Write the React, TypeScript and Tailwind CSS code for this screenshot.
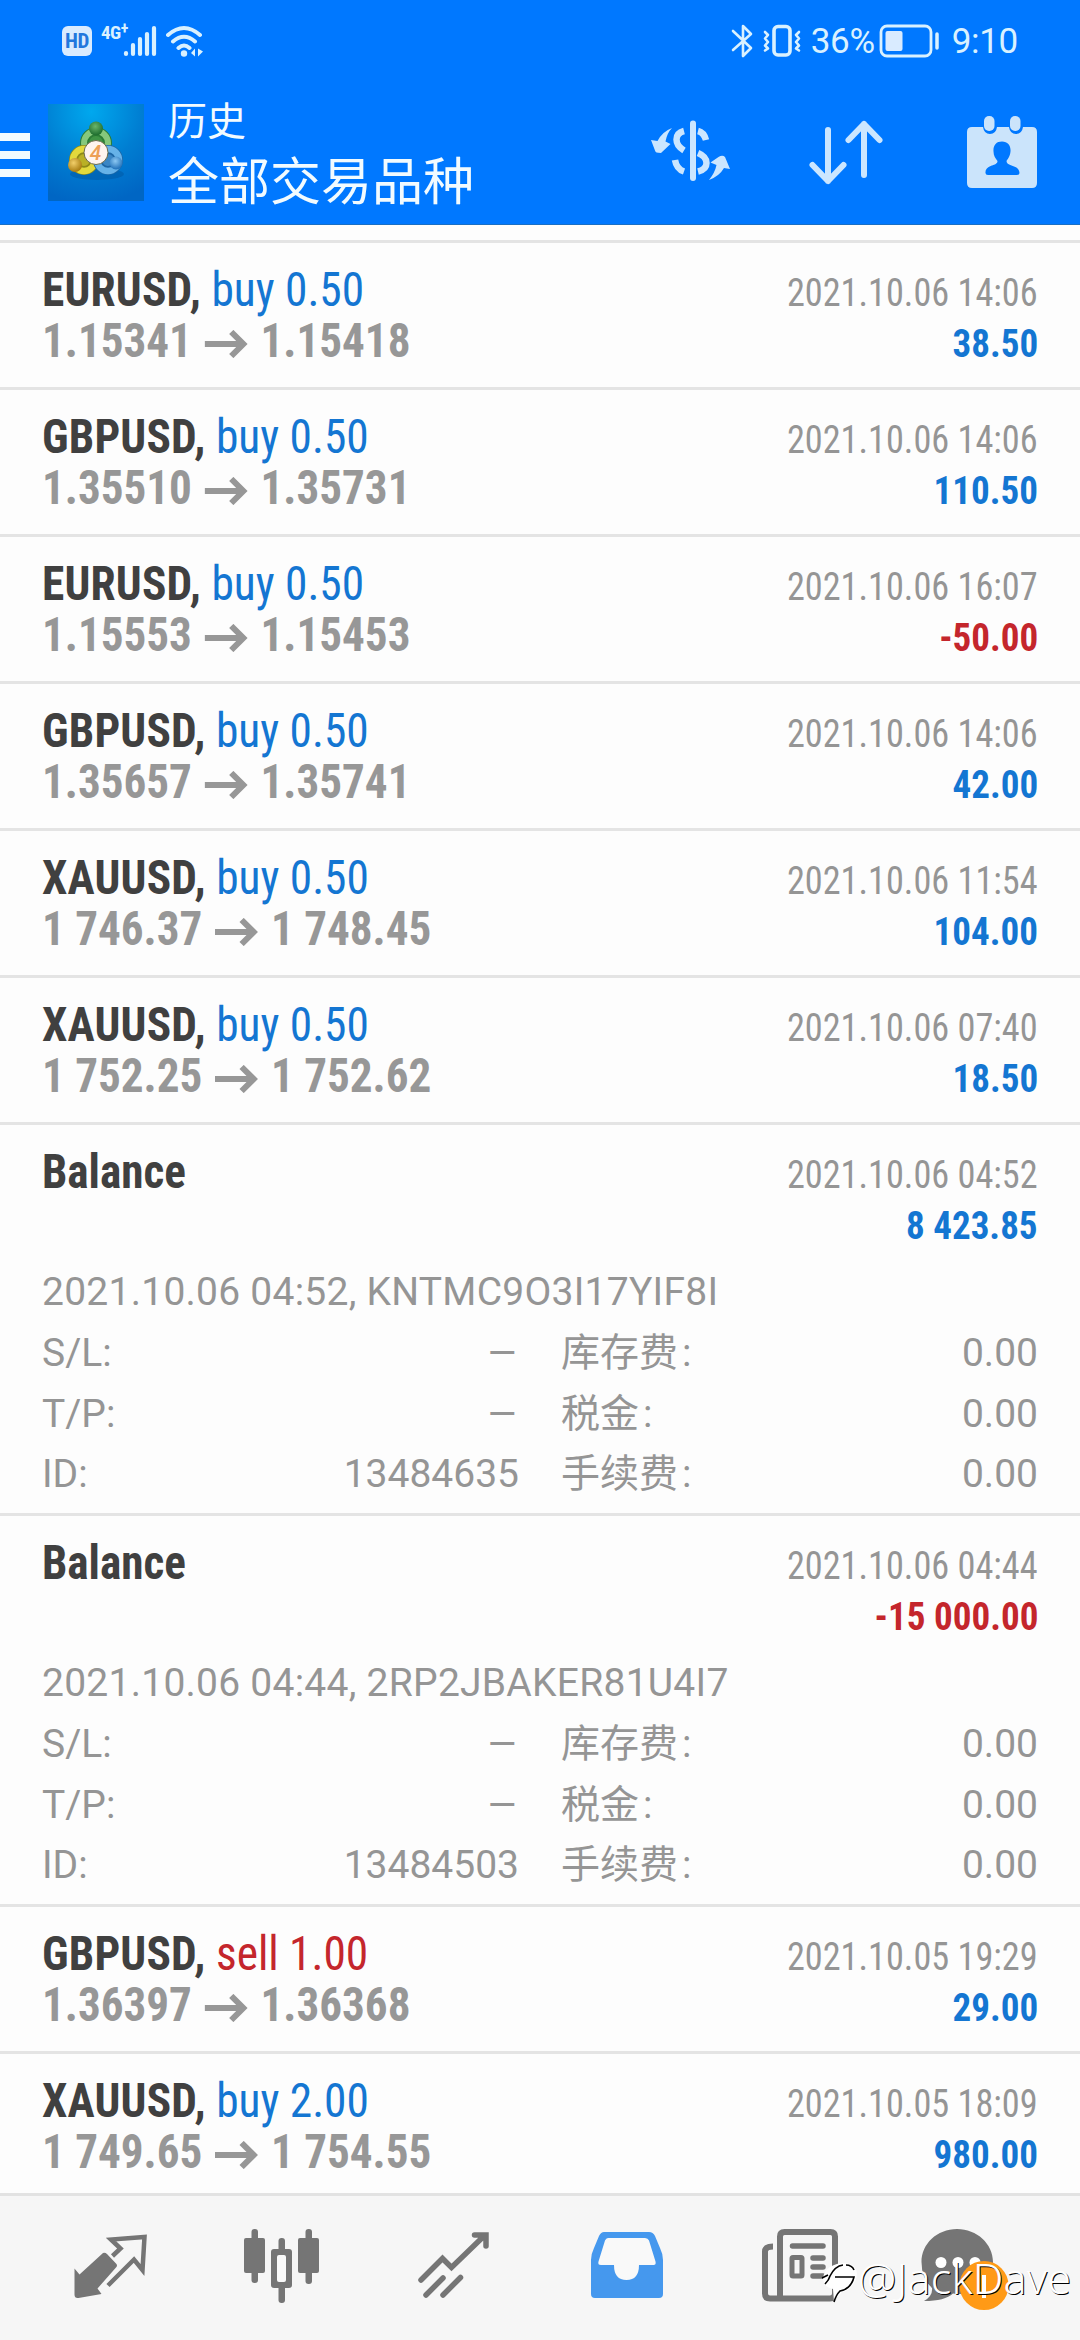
import type { ReactNode } from 'react';
import clsx from 'clsx';

type Deal = {
  symbol: string;
  side: 'buy' | 'sell';
  volume: string;
  open: string;
  close: string;
  time: string;
  profit: string;
};

type Balance = {
  time: string;
  profit: string;
  comment: string;
  id: string;
};

const deals: Deal[] = [
  { symbol: 'EURUSD', side: 'buy', volume: '0.50', open: '1.15341', close: '1.15418', time: '2021.10.06 14:06', profit: '38.50' },
  { symbol: 'GBPUSD', side: 'buy', volume: '0.50', open: '1.35510', close: '1.35731', time: '2021.10.06 14:06', profit: '110.50' },
  { symbol: 'EURUSD', side: 'buy', volume: '0.50', open: '1.15553', close: '1.15453', time: '2021.10.06 16:07', profit: '-50.00' },
  { symbol: 'GBPUSD', side: 'buy', volume: '0.50', open: '1.35657', close: '1.35741', time: '2021.10.06 14:06', profit: '42.00' },
  { symbol: 'XAUUSD', side: 'buy', volume: '0.50', open: '1 746.37', close: '1 748.45', time: '2021.10.06 11:54', profit: '104.00' },
  { symbol: 'XAUUSD', side: 'buy', volume: '0.50', open: '1 752.25', close: '1 752.62', time: '2021.10.06 07:40', profit: '18.50' },
];

const balances: Balance[] = [
  { time: '2021.10.06 04:52', profit: '8 423.85', comment: 'KNTMC9O3I17YIF8I', id: '13484635' },
  { time: '2021.10.06 04:44', profit: '-15 000.00', comment: '2RP2JBAKER81U4I7', id: '13484503' },
];

const olderDeals: Deal[] = [
  { symbol: 'GBPUSD', side: 'sell', volume: '1.00', open: '1.36397', close: '1.36368', time: '2021.10.05 19:29', profit: '29.00' },
  { symbol: 'XAUUSD', side: 'buy', volume: '2.00', open: '1 749.65', close: '1 754.55', time: '2021.10.05 18:09', profit: '980.00' },
];

const StatusBar = () => (
  <div className="flex h-[80px] items-center pr-[62px] pl-[62px] pt-[2px] text-[#d9f1ff]">
    <span className="flex h-[30px] w-[30px] items-center justify-center rounded-[6px] bg-[#d9ebff] text-[21px] leading-none font-bold tracking-[-0.5px] text-[#2277dd] font-['Roboto_Condensed',sans-serif]">
      HD
    </span>
    <span className="mb-[18px] ml-[9px] flex w-[22px] items-start text-[19px] leading-none font-bold tracking-[-0.5px] font-['Roboto_Condensed',sans-serif]">
      4G<span className="-mt-[2px] text-[16px]">+</span>
    </span>
    <svg className="h-[32px] w-[34px]" viewBox="0 0 34 32" stroke="currentColor" strokeWidth="4.2" strokeLinecap="round">
      <path d="M3 29v-1M10 29v-9M17 29V14M24 29V9M31 29V3" />
    </svg>
    <svg className="ml-[9px] h-[33px] w-[38px]" viewBox="0 0 38 33" fill="none" stroke="currentColor" strokeWidth="4" strokeLinecap="round">
      <path d="M2 10q16-14 32 0M7 16.500q11-9.500 22 0M12.500 23q5.500-5 11 0" />
      <circle cx="18" cy="28.500" r="3.200" fill="currentColor" stroke="none" />
      <path d="M29 23.500v8l-4-3.500zM32 23.500v8l5-5z" fill="currentColor" stroke="none" />
    </svg>
    <div className="flex-1" />
    <svg className="h-[36px] w-[22px]" viewBox="0 0 22 36" fill="none" stroke="currentColor" strokeWidth="2.600" strokeLinejoin="round" strokeLinecap="round">
      <path d="M2 8l18 17-8 8V3l8 8L2 27" />
    </svg>
    <svg className="ml-[9px] h-[36px] w-[40px]" viewBox="0 0 40 36" fill="none" stroke="currentColor" strokeLinejoin="round" strokeLinecap="round">
      <rect x="12" y="3.500" width="16" height="28.500" rx="4" strokeWidth="3.600" />
      <path d="M3 9l3 3-3 3.500 3 3.500-3 3.500 3 3-3 2M37 9l-3 3 3 3.500-3 3.500 3 3.500-3 3 3 2" strokeWidth="2.600" />
    </svg>
    <span className="ml-[9px] w-[68px] text-[35px] leading-none whitespace-nowrap tracking-[-0.3px] font-['Roboto',sans-serif]">36%</span>
    <svg className="h-[34px] w-[62px]" viewBox="0 0 62 34" fill="none">
      <rect x="2" y="2" width="50" height="30" rx="6" stroke="currentColor" strokeWidth="2.800" />
      <rect x="6.500" y="7" width="17" height="20" rx="2" fill="#d9ebff" />
      <path d="M58 10v14" stroke="currentColor" strokeWidth="3.500" strokeLinecap="round" />
    </svg>
    <span className="ml-[11px] text-[35px] leading-none tracking-[-0.3px] font-['Roboto',sans-serif]">9:10</span>
  </div>
);

const Logo = () => (
  <svg className="h-[97px] w-[96px] shrink-0" viewBox="48 104 96 97">
    <defs>
      <radialGradient id="sky" cx="45%" cy="8%" r="95%">
        <stop offset="0" stopColor="#00a8ee" />
        <stop offset="0.550" stopColor="#007ed2" />
        <stop offset="1" stopColor="#0066c4" />
      </radialGradient>
      <radialGradient id="green" cx="45%" cy="35%" r="65%">
        <stop offset="0" stopColor="#6ab56a" />
        <stop offset="1" stopColor="#1b6b2c" />
      </radialGradient>
      <radialGradient id="gold" cx="40%" cy="35%" r="65%">
        <stop offset="0" stopColor="#f2cf6a" />
        <stop offset="1" stopColor="#a87c10" />
      </radialGradient>
      <radialGradient id="azure" cx="45%" cy="35%" r="65%">
        <stop offset="0" stopColor="#8cc8f2" />
        <stop offset="1" stopColor="#1f6fb8" />
      </radialGradient>
    </defs>
    <rect x="48" y="104" width="96" height="97" fill="url(#sky)" />
    <ellipse cx="97" cy="174" rx="27" ry="6" fill="#004f95" opacity="0.400" />
    <circle cx="96" cy="143" r="11.500" fill="#3f9445" stroke="#2c7d36" strokeWidth="9" />
    <circle cx="96" cy="143" r="12" fill="none" stroke="#86c87c" strokeWidth="6" />
    <circle cx="84" cy="160" r="10.500" fill="#b9b025" stroke="#8d8a18" strokeWidth="9" />
    <circle cx="84" cy="160" r="11" fill="none" stroke="#e2d93c" strokeWidth="6.500" />
    <circle cx="108" cy="160" r="10.500" fill="#3a86c4" stroke="#1d66a5" strokeWidth="9" />
    <circle cx="108" cy="160" r="11" fill="none" stroke="#66b2e8" strokeWidth="6.500" />
    <circle cx="96" cy="128.500" r="7" fill="url(#green)" />
    <circle cx="75" cy="165" r="7" fill="url(#gold)" />
    <circle cx="116" cy="163" r="6.500" fill="url(#azure)" />
    <circle cx="96" cy="152.500" r="12" fill="#fff4ee" stroke="#6b6b4a" strokeWidth="1" />
    <text x="95.500" y="160" textAnchor="middle" fontSize="21" fontStyle="italic" fontWeight="500" fill="#eda055" fontFamily="Roboto, sans-serif">
      4
    </text>
  </svg>
);

const AppBar = () => (
  <div className="flex h-[145px] items-start text-[#f2fbff]">
    <div className="mt-[53px] flex w-[30px] shrink-0 flex-col gap-[10px]">
      <span className="h-2 bg-current" />
      <span className="h-2 bg-current" />
      <span className="h-2 bg-current" />
    </div>
    <div className="mt-[24px] ml-[18px]">
      <Logo />
    </div>
    <div className="ml-[24px] flex flex-1 flex-col font-['Noto_Sans_CJK_SC',sans-serif]">
      <span className="mt-[14px] text-[39px] leading-[48px]">历史</span>
      <span className="mt-[6px] text-[51px] leading-[60px]">全部交易品种</span>
    </div>
    {/* currency */}
    <svg className="mt-[36px] h-[70px] w-[86px] text-[#cbe6ff]" viewBox="648 116 86 70" fill="none" stroke="currentColor">
      <path d="M693 123.500v54.500" strokeWidth="6" strokeLinecap="round" />
      <path d="M684 131q-7.500 2-7.500 8.500 0 6.500 7.500 11M675 160q1.500 9 9 11.500M698 131q6 1.500 8 9M698 153q8.500 3.500 8.500 10 0 6.500-8.500 8.500" strokeWidth="6.500" />
      <path d="M672 128q-5 5-6.500 13.500l5 2.500-9.500 9q-6 0-6-2.500l-4-10.500 6.500 1q5-9.500 14.500-13zM709 180q6-7.500 7.500-15l-6-2.500 8-5.500q4-2.500 6.500 0l5 12-6-1q-4.500 8-15 12z" fill="currentColor" stroke="none" />
    </svg>
    {/* sort */}
    <svg className="mt-[38px] ml-[73px] h-[68px] w-[78px] text-[#cbe6ff]" viewBox="807 118 78 68" fill="none" stroke="currentColor" strokeWidth="6" strokeLinecap="round" strokeLinejoin="round">
      <path d="M828 130v51M812.500 165l15.500 16 15.500-16M864 175v-51M848.500 140l15.500-16 15.500 16" />
    </svg>
    {/* calendar */}
    <svg className="mt-[34px] mr-[40px] ml-[80px] h-[76px] w-[75px] text-[#cbe4fb]" viewBox="965 114 75 76">
      <path d="M972 127h11q1 7 7 7t7-7h12q1 7 7 7t7-7h9q5 0 5 5v51q0 5-5 5h-60q-5 0-5-5v-51q0-5 5-5z" fill="currentColor" />
      <rect x="984" y="116" width="10.500" height="15" rx="5" fill="currentColor" />
      <rect x="1010" y="116" width="10.500" height="15" rx="5" fill="currentColor" />
      <path d="M1002 141.500c6 0 9 4.500 8.500 10-.5 5-2.500 7-4 9.500 0 6 12.500 3 13 12q0 2-2.500 2h-29q-3 0-2.500-3c1-8 12-5.500 12-11-2-2.500-4-5-4-9.500-.5-6 2.500-10 8.500-10z" fill="#0078ff" />
    </svg>
  </div>
);

const profitColor = (profit: string) => (profit.startsWith('-') ? 'text-[#c4262c]' : 'text-[#1476d2]');

const Time = ({ children }: { children: ReactNode }) => (
  <span className="origin-right scale-x-[0.93] text-[39px] text-[#959595]">{children}</span>
);

const Profit = ({ value }: { value: string }) => (
  <span className={clsx('origin-right scale-x-[0.95] text-[39px] font-bold', profitColor(value))}>{value}</span>
);

const PriceArrow = () => (
  <svg className="mr-[14px] ml-[13px] inline-block h-[28px] w-[46px]" viewBox="0 0 43 28" preserveAspectRatio="none" fill="none" stroke="currentColor" strokeWidth="6">
    <path d="M0 14h38M26.500 2l12 12-12 12" />
  </svg>
);

const DealRow = ({ deal }: { deal: Deal }) => (
  <div className="h-[147px] shrink-0 border-b-[3px] border-[#e4e4e4] pt-[21px] pr-[42px] pl-[42px] font-['Roboto_Condensed',sans-serif] leading-[51px]">
    <div className="flex h-[51px] items-baseline justify-between">
      <div className="origin-left scale-x-[0.945] text-[48px] whitespace-pre">
        <span className="font-bold tracking-[0.2px] text-[#404040]">{deal.symbol},</span>
        <span className={deal.side === 'buy' ? 'text-[#1476d2]' : 'text-[#c4262c]'}>
          {' '}
          {deal.side} {deal.volume}
        </span>
      </div>
      <Time>{deal.time}</Time>
    </div>
    <div className="flex h-[51px] items-baseline justify-between">
      <div className="origin-left scale-x-[0.94] text-[48px] font-bold text-[#979797]">
        {deal.open}
        <PriceArrow />
        {deal.close}
      </div>
      <Profit value={deal.profit} />
    </div>
  </div>
);

const DetailRow = ({ label, value, label2 }: { label: string; value?: string; label2: string }) => (
  <div className="flex h-[60.5px] items-baseline">
    <div className="flex w-[477px] justify-between">
      <span>{label}</span>
      {value ? <span>{value}</span> : <span className="origin-right scale-x-[1.25]">–</span>}
    </div>
    <div className="ml-[42px] flex flex-1 justify-between">
      <span>
        {label2}
        <span className="ml-[4px]">:</span>
      </span>
      <span>0.00</span>
    </div>
  </div>
);

const BalanceRow = ({ item }: { item: Balance }) => (
  <div className="h-[391px] shrink-0 border-b-[3px] border-[#e4e4e4] pt-[21px] pr-[42px] pl-[42px]">
    <div className="font-['Roboto_Condensed',sans-serif] leading-[51px]">
      <div className="flex h-[51px] items-baseline justify-between">
        <span className="origin-left scale-x-[0.94] text-[48px] font-bold text-[#404040]">Balance</span>
        <Time>{item.time}</Time>
      </div>
      <div className="flex h-[51px] justify-end pt-[4px]">
        <Profit value={item.profit} />
      </div>
    </div>
    <div className="mt-[14px] text-[39px] leading-[61px] text-[#959595] font-['Roboto','Noto_Sans_CJK_SC',sans-serif]">
      <div className="h-[61px] tracking-[0.25px]">
        {item.time}, {item.comment}
      </div>
      <DetailRow label="S/L:" label2="库存费" />
      <DetailRow label="T/P:" label2="税金" />
      <DetailRow label="ID:" value={item.id} label2="手续费" />
    </div>
  </div>
);

const TabBar = () => (
  <div className="relative flex h-[147px] shrink-0 items-start border-t-[3px] border-[#e2e2e2] bg-[#f6f6f6] pt-[29px] text-[#757575]">
    {/* quotes */}
    <svg className="ml-[70px] h-[82px] w-[80px]" viewBox="70 2225 80 82" fill="none" stroke="currentColor">
      <path d="M112.500 2256l8-7.500-9.500-9 33.500-2.500-2 33-8.500-10.500-26 26" strokeWidth="4.500" />
      <path d="M103 2253q2-1 4 1l9 9.500q2 2 0 4l-18.500 21 4 5.500-23 4q-4 .5-4-3.500v-26l5 6z" fill="currentColor" stroke="none" />
    </svg>
    {/* charts */}
    <svg className="ml-[90px] h-[82px] w-[84px]" viewBox="240 2225 84 82">
      <g fill="currentColor">
        <rect x="251.500" y="2229" width="6.500" height="54" rx="3" />
        <rect x="244" y="2238" width="21" height="35" rx="2" />
        <rect x="305.500" y="2229" width="6.500" height="55" rx="3" />
        <rect x="298" y="2238" width="21" height="35" rx="2" />
        <rect x="278.500" y="2238" width="6.500" height="65" rx="3" />
        <rect x="271" y="2249" width="21" height="39" rx="3" />
      </g>
      <rect x="277" y="2255" width="9" height="27" rx="2" fill="#f9f9f9" />
    </svg>
    {/* trade */}
    <svg className="ml-[90px] h-[82px] w-[80px]" viewBox="414 2225 80 82" fill="none" stroke="currentColor" strokeWidth="5.500" strokeLinecap="round">
      <path d="M421 2280l21.500-21.500 9 9 33-32M474.500 2235h11.500v11" strokeLinejoin="miter" />
      <path d="M426 2295l17-17M443 2295l17.500-17.500" />
    </svg>
    {/* history */}
    <svg className="ml-[92px] h-[82px] w-[80px]" viewBox="586 2225 80 82">
      <path d="M604 2232h45q4 0 6 4l5 12q3 6 3 12v34q0 4-4 4h-64q-4 0-4-4v-34q0-6 3-12l5-12q2-4 5-4z" fill="#4598ee" />
      <path d="M608 2238h37q3 0 4 2.500l6.500 21q.8 3.500-2 3.500h-14.500q0 15-12.500 15t-12.500-15h-13q-3.500 0-2.500-3.500l6.500-21q1-2.500 3-2.500z" fill="#f9f9f9" />
    </svg>
    {/* news */}
    <svg className="ml-[92px] h-[82px] w-[84px]" viewBox="758 2225 84 82" fill="none" stroke="currentColor">
      <path d="M773 2246.500q-8 0-8 5v42q0 5 5 5h60q5 0 5-5v-57q0-4.500-4.500-4.500h-46q-4.500 0-4.500 4.500v62" strokeWidth="6" />
      <path d="M792.500 2246h30.500M813 2258h10M813 2267h10M813 2276h10" strokeWidth="5.500" strokeLinecap="round" />
      <rect x="792" y="2257.500" width="10" height="18.500" strokeWidth="5" rx="1" />
    </svg>
    {/* mailbox */}
    <svg className="ml-[74px] h-[90px] w-[100px]" viewBox="916 2225 100 90">
      <path d="M957 2229c20 0 36 15 36 33s-15 32-33 32q-4 0-7-.5-8 7.500-29 7.500 9-5 8-13-10.500-9-10.500-26c0-18 15.500-33 35.500-33z" fill="currentColor" />
      <circle cx="941" cy="2262.500" r="5.500" fill="#fff" />
      <circle cx="958" cy="2262.500" r="5.500" fill="#fff" />
      <circle cx="975" cy="2262.500" r="5.500" fill="#fff" />
      <circle cx="984" cy="2285.500" r="24.500" fill="#ff9a16" />
      <path d="M984 2275v23" stroke="#fff" strokeWidth="4" />
    </svg>
    {/* watermark */}
    <div className="absolute top-[54px] left-[821px] flex items-start">
      <svg className="mt-[11px] h-[44px] w-[37px]" viewBox="820 2261 37 44" fill="none">
        <path d="M829 2267q12-7 22-2 7 5 4 14-4 11-14 13l-8 10-1-13q-10-2-10-11 1-7 7-11z" fill="#fff" />
        <path d="M824 2284q4-4 5-8 5-10 13-11M827 2275l-6 3M834 2277h19q-3 12-14 14-4 4-6 11M845 2265q6 0 8 5" stroke="#000" strokeWidth="1.600" />
      </svg>
      <span className="text-[43px] leading-[56px] font-light tracking-[0.2px] whitespace-nowrap text-white [text-shadow:1px_1px_0_#000] font-['Noto_Sans',sans-serif]">
        @JackDave
      </span>
    </div>
  </div>
);

export default function App() {
  return (
    <div className="flex h-[2340px] w-[1080px] flex-col overflow-hidden bg-[#fdfdfd]">
      <div className="h-[225px] shrink-0 border-b border-[#1a6fc4] bg-[#0078ff]">
        <StatusBar />
        <AppBar />
      </div>
      <div className="flex min-h-0 flex-1 flex-col overflow-hidden">
        <div className="h-[18px] shrink-0 border-b-[3px] border-[#e4e4e4]" />
        {deals.map((deal, i) => (
          <DealRow key={i} deal={deal} />
        ))}
        {balances.map((item) => (
          <BalanceRow key={item.id} item={item} />
        ))}
        {olderDeals.map((deal, i) => (
          <DealRow key={i} deal={deal} />
        ))}
      </div>
      <TabBar />
    </div>
  );
}
